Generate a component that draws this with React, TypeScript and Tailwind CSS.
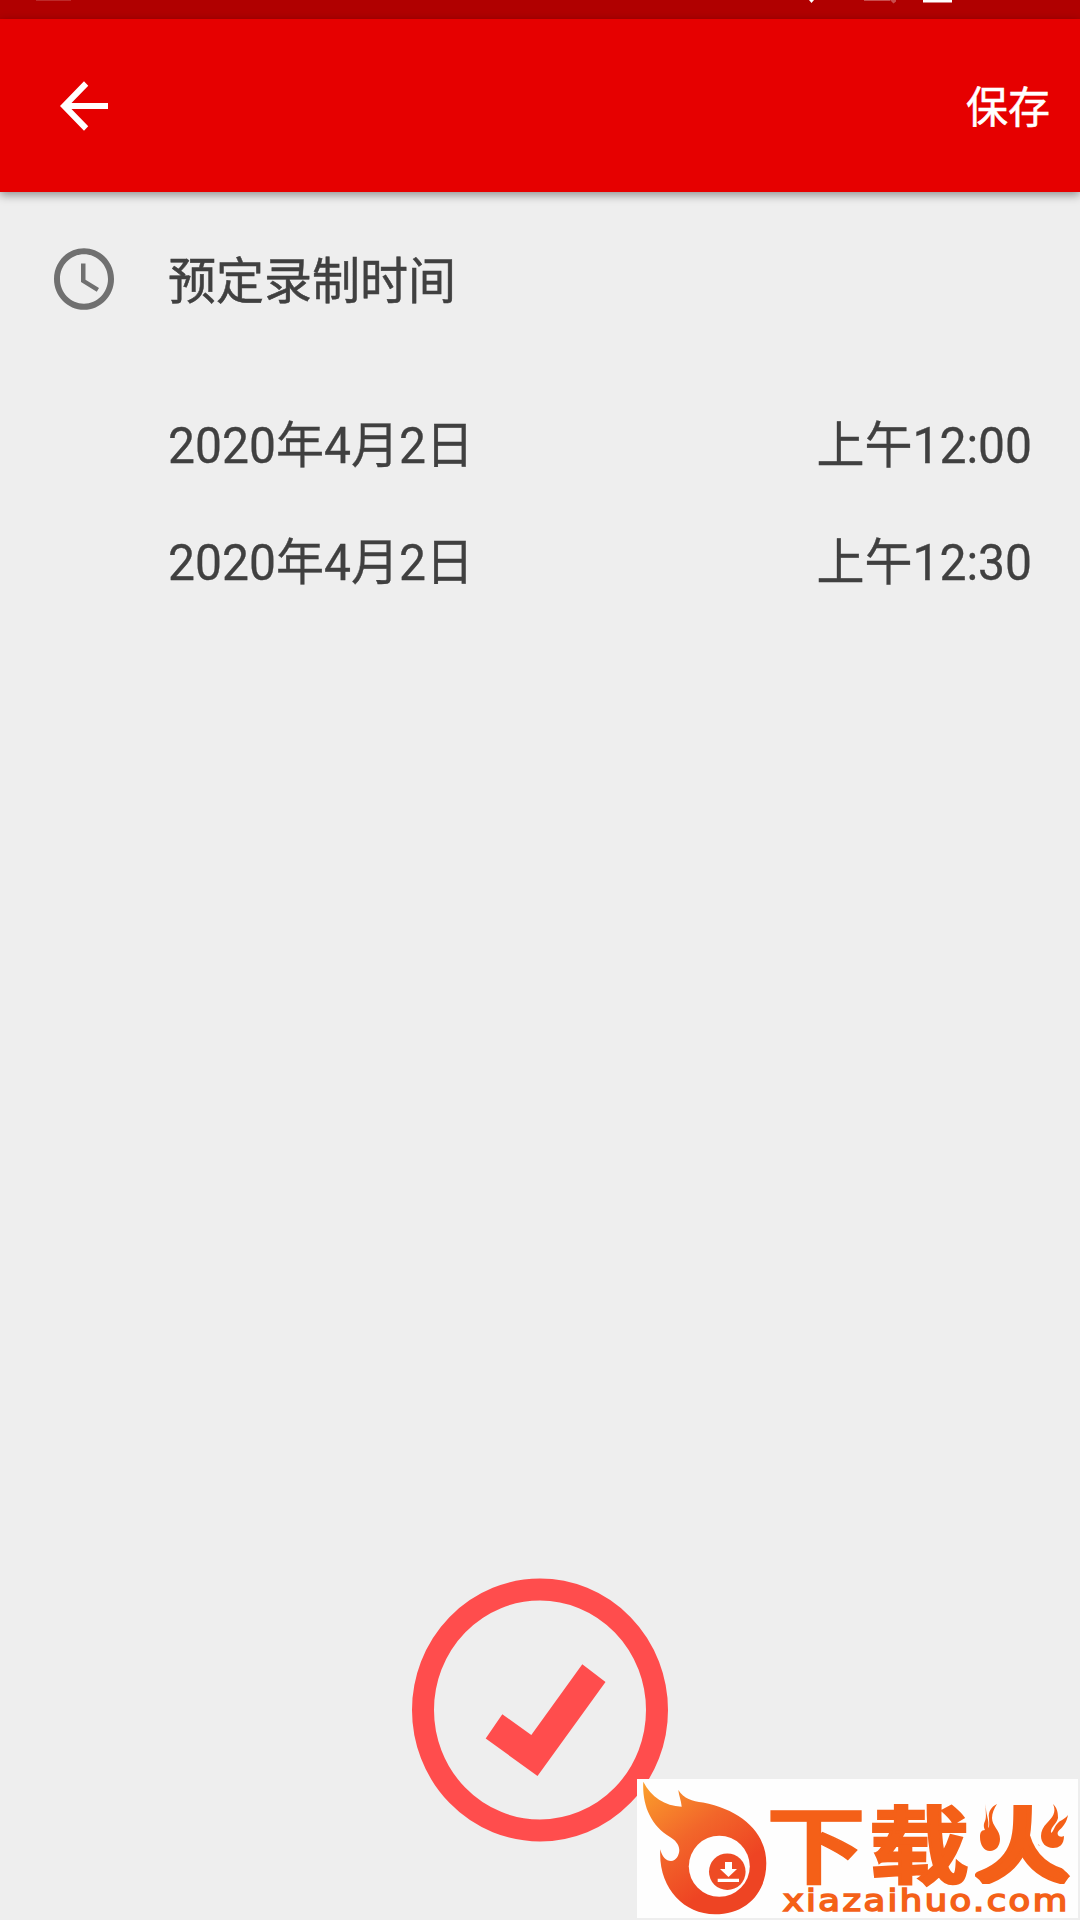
const entries = [
  { date: "2020年4月2日", time: "上午12:00" },
  { date: "2020年4月2日", time: "上午12:30" },
];

function StatusBar() {
  return (
    <div className="h-[19px] bg-[#b00000]">
      <svg className="block h-[19px] w-full" viewBox="0 0 1080 19">
        <path d="M36 0h35v.7H36z" fill="#fff" opacity=".22" />
        <path d="M809 0h5l-2.500 3z" fill="#fff" />
        <path d="M864 0h26l3.500 3.500 2.500-2v-1.500h-6v1h-26z" fill="#fff" opacity=".3" />
        <path d="M923 0h29v2.500h-29z" fill="#fff" />
      </svg>
    </div>
  );
}

function Header() {
  return (
    <header className="flex h-[173px] items-center justify-between bg-[#e60000] pr-[30px] pl-12 text-white shadow-[0_3px_9px_rgba(0,0,0,0.4)]">
      <svg className="h-[74px] w-[72px]" viewBox="0 0 24 24" preserveAspectRatio="none" fill="currentColor">
        <path d="M20 11H7.830l5.590-5.590L12 4l-8 8 8 8 1.410-1.410L7.830 13H20v-2z" />
      </svg>
      <button className="mt-[7px] scale-y-[1.03] text-[42px] leading-none [-webkit-text-stroke:0.5px_white]">
        保存
      </button>
    </header>
  );
}

function ClockIcon() {
  return (
    <svg className="h-[74px] w-[72px]" viewBox="0 0 24 24" preserveAspectRatio="none" fill="#707070">
      <path d="M11.990 2C6.470 2 2 6.480 2 12s4.470 10 9.990 10C17.520 22 22 17.520 22 12S17.520 2 11.990 2zM12 20c-4.420 0-8-3.580-8-8s3.580-8 8-8 8 3.580 8 8-3.580 8-8 8z" />
      <path d="M12.500 7H11v6l5.250 3.150.75-1.230-4.500-2.670z" />
    </svg>
  );
}

function SaveBadge() {
  return (
    <svg className="h-[264px] w-64" viewBox="0 0 256 264">
      <ellipse cx="128" cy="132" rx="117" ry="120.500" fill="none" stroke="#ff4d4d" strokeWidth="22" />
      <path d="M170.300 86.300 193.500 104 125.500 198 73.700 160.500 90.300 136.300 119.300 157z" fill="#ff4d4d" />
    </svg>
  );
}

function Watermark() {
  return (
    <svg className="absolute top-[1779px] left-[637px] h-[139px] w-[441px] bg-[#fefefe]" viewBox="0 0 441 139">
      <defs>
        <linearGradient id="flame" x1="0" y1="0" x2=".55" y2=".8">
          <stop offset="0" stopColor="#fba02c" />
          <stop offset=".55" stopColor="#f2662a" />
          <stop offset="1" stopColor="#ee4423" />
        </linearGradient>
        {/* keeps the long strokes of the last character, its dots are flames */}
        <clipPath id="strokes">
          <path d="M374 26h26v38l34 34v7H338v-10l36-40z" />
        </clipPath>
      </defs>
      <path
        d="M6.300 2.700C14 18 28 27 44.700 27.700 44 21 42 17 41.300 11 47 20 55 22 66 23.500 104 31 129.300 53 129.300 84.300 129.300 115 108 135.300 78 135.300 46 135.300 21 108 23.300 70.300 25 78 29 82 34 82 39 82 42.300 76 42.300 71 42 65 38 61 33 58 13 46 5 25 6.300 2.700z"
        fill="url(#flame)"
      />
      <circle cx="82.300" cy="87.300" r="30.500" fill="#fefefe" />
      <circle cx="90.300" cy="92.700" r="18.300" fill="#ee4b24" />
      <path d="M88 83h7v7h5l-8.500 8-8.500-8h5zM80.700 99.700h21.300v3.300H80.700z" fill="#fff" />
      <g
        className="font-['Noto_Sans_CJK_SC',sans-serif] font-bold"
        fill="#f46018"
        stroke="#f46018"
        strokeWidth="1.500"
        fontSize="100"
      >
        <text transform="translate(129 98) scale(1 .84)">下</text>
        <text transform="translate(232 98) scale(1 .84)" strokeWidth="3">
          载
        </text>
        <g clipPath="url(#strokes)" strokeWidth="5">
          <text transform="translate(336 97) scale(1 .86)">火</text>
        </g>
      </g>
      <g fill="#f46018">
        <path d="M349 25c-1 8 1 12-1 17-2 4-1 7 0 9-4 0-5 3-5 7 0 8 4 14 10 14s10-5 10-12c0-9-8-13-8-21 0-5 2-9 5-14-6 3-9 8-8 14 0 4 1 8-1 10 2-8-3-14-2-24z" />
        <path d="M416 25c4 8-1 14-6 19-4 4-6 8-6 13 0 7 5 12 12 12 6 0 11-3 11-12-2 1-5 1-6-1-2-6 7-5 10-20-4 5-8 5-11 9-3 3-3 7-6 9-1-6 6-9 7-15 0-6-1-10-5-14z" />
      </g>
      <text
        x="123.500"
        y="132.500"
        transform="scale(1.180 1)"
        textLength="241"
        fontSize="30"
        fill="#f46018"
        stroke="#f46018"
        strokeWidth="1.600"
        className="font-['DejaVu_Sans',sans-serif]"
      >
        xiazaihuo.com
      </text>
    </svg>
  );
}

export default function App() {
  return (
    <div className="relative flex h-[1920px] w-[1080px] flex-col overflow-hidden bg-[#eee] font-['Roboto','Noto_Sans_CJK_SC',sans-serif] text-[#404040]">
      <StatusBar />
      <Header />
      <main className="flex flex-1 flex-col text-[48px] leading-none">
        <div className="mt-[50px] flex h-[74px] items-center pl-12">
          <ClockIcon />
          <h1 className="mt-[7px] ml-12 scale-y-[1.03] [-webkit-text-stroke:0.5px_#404040]">预定录制时间</h1>
        </div>
        <div className="mt-[72px] pr-12 pl-[168px] [-webkit-text-stroke:0.3px_#404040]">
          {entries.map((entry) => (
            <div key={entry.time} className="flex h-[117px] items-center justify-between">
              <span className="scale-y-[1.03]">{entry.date}</span>
              <span className="scale-y-[1.03]">{entry.time}</span>
            </div>
          ))}
        </div>
        <div className="mt-auto mb-[78px] flex justify-center">
          <SaveBadge />
        </div>
      </main>
      <Watermark />
    </div>
  );
}
